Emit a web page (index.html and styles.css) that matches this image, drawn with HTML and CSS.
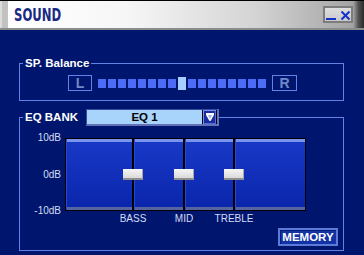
FILE: index.html
```html
<!DOCTYPE html>
<html lang="en">
<head>
  <meta charset="UTF-8">
  <title>Sound</title>
  <link rel="stylesheet" href="styles.css">
</head>
<body>
  <div class="window">
    <div class="titlebar">
      <span class="title">SOUND</span>
      <div class="win-buttons">
        <svg width="26" height="13" viewBox="0 0 26 13">
          <rect x="1" y="10" width="10" height="2" fill="#1432c8"/>
          <path d="M16.5 3.5 L24.5 11.5 M24.5 3.5 L16.5 11.5" stroke="#1432c8" stroke-width="2" fill="none"/>
        </svg>
      </div>
    </div>

    <fieldset class="group balance">
      <legend class="group-label">SP. Balance</legend>
      <div class="balance-row">
        <span class="side">L</span>
        <div class="blocks">
          <span class="block"></span><span class="block"></span><span class="block"></span><span class="block"></span>
          <span class="block"></span><span class="block"></span><span class="block"></span><span class="block"></span>
          <span class="bal-thumb"></span>
          <span class="block"></span><span class="block"></span><span class="block"></span><span class="block"></span>
          <span class="block"></span><span class="block"></span><span class="block"></span><span class="block"></span>
        </div>
        <span class="side side-r">R</span>
      </div>
    </fieldset>

    <fieldset class="group eq">
      <legend class="group-label eq-legend">
        <span>EQ BANK</span>
        <div class="select">
          <div class="select-value">EQ 1</div>
          <div class="select-btn">
            <svg width="8" height="8" viewBox="0 0 8 8">
              <path d="M0 0 H8 V2 L4.5 8 H3.5 L0 2 Z" fill="#ffffff"/>
              <path d="M2 2 H6 L4 6 Z" fill="#9ab4f0"/>
            </svg>
          </div>
        </div>
      </legend>

      <div class="eq-body">
        <div class="scale">
          <span>10dB</span>
          <span>0dB</span>
          <span>-10dB</span>
        </div>
        <div class="eq-main">
          <div class="panel">
            <div class="col w1"></div>
            <div class="track"><span class="knob"></span></div>
            <div class="col w2"></div>
            <div class="track"><span class="knob"></span></div>
            <div class="col w3"></div>
            <div class="track"><span class="knob"></span></div>
            <div class="col w4"></div>
          </div>
          <div class="band-labels">
            <div class="w1"></div>
            <div class="tick"><span>BASS</span></div>
            <div class="w2"></div>
            <div class="tick"><span>MID</span></div>
            <div class="w3"></div>
            <div class="tick"><span>TREBLE</span></div>
          </div>
        </div>
      </div>

      <div class="memory-row">
        <button class="memory-btn">MEMORY</button>
      </div>
    </fieldset>
  </div>
</body>
</html>
```

FILE: styles.css
```css
* {
  box-sizing: border-box;
  margin: 0;
  padding: 0;
}

body {
  width: 364px;
  height: 255px;
  overflow: hidden;
  background-color: #00166e;
  font-family: "Liberation Sans", Arial, sans-serif;
  color: #ffffff;
}

.window {
  width: 364px;
  height: 255px;
  background-color: #00166e;
}

/* title bar */
.titlebar {
  height: 30px;
  display: flex;
  align-items: center;
  justify-content: space-between;
  border-top: 1px solid #000;
  border-bottom: 2px solid #8c8c8c;
  background: linear-gradient(to right, #dcdcdc 0, #dcdcdc 2px, #c2c2c2 2px, #c2c2c2 8px, #ffffff 8px, #f6f6f6 35%, #d4d4d4 70%, #a4a4a4 97%, #505050 98.5%, #2a2a2a 100%);
}

.title {
  display: inline-block;
  padding-left: 14px;
  font-family: "Liberation Sans Narrow", "DejaVu Sans Condensed", "Liberation Sans", sans-serif;
  font-size: 18px;
  font-weight: bold;
  color: #1a2a84;
  transform: scaleX(0.72);
  transform-origin: 14px 50%;
}

.win-buttons {
  width: 30px;
  height: 17px;
  margin-right: 11px;
  border: 2px solid #7c7c7c;
  background: linear-gradient(#dedede, #cacaca);
  display: flex;
}

/* groups */
.group {
  margin: 0 20px 0 19px;
  border: 1px solid #6482e6;
  min-width: 0;
}

.group-label {
  margin-left: 3px;
  padding: 0 2px;
  font-size: 11.5px;
  font-weight: bold;
  line-height: 15px;
  color: #ffffff;
}

.balance {
  margin-top: 26px;
  padding: 4px 0 9px 0;
}

.balance-row {
  display: flex;
  align-items: center;
  gap: 6px;
  height: 16px;
  padding-left: 48px;
}

.side {
  width: 24px;
  height: 16px;
  border: 1px solid #6482e6;
  display: flex;
  align-items: center;
  justify-content: center;
  font-size: 14px;
  font-weight: bold;
  color: #7088cc;
}

.side-r {
  width: 25px;
}

.blocks {
  display: flex;
  align-items: center;
  gap: 2px;
}

.block {
  width: 8px;
  height: 9px;
  background-color: #4c6cf6;
}

.bal-thumb {
  width: 8px;
  height: 13px;
  background-color: #a6ceff;
}

/* eq bank */
.eq {
  margin-top: 8px;
  padding: 12px 0 4px 0;
}

.eq-legend {
  display: flex;
  align-items: center;
  gap: 8px;
  padding-right: 0;
}

.select {
  width: 133px;
  height: 17px;
  display: flex;
  border-top: 1px solid #3a4a9a;
  border-left: 1px solid #3a4a9a;
  border-right: 2px solid #6272b8;
  border-bottom: 2px solid #6272b8;
}

.select-value {
  flex: 1;
  background-color: #a8d4fc;
  color: #000;
  text-align: center;
  font-size: 11.5px;
  line-height: 14px;
}

.select-btn {
  width: 15px;
  border-left: 1px solid #000;
  border-right: 1px solid #000;
  background-color: #1a2ca4;
  box-shadow: inset 1px 1px 0 #7090f0, inset -1px -1px 0 #5070d8;
  display: flex;
  align-items: center;
  justify-content: center;
}

.eq-body {
  display: flex;
  gap: 4px;
}

.scale {
  width: 41px;
  height: 85px;
  margin-top: -6px;
  display: flex;
  flex-direction: column;
  justify-content: space-between;
  align-items: flex-end;
  font-size: 10px;
  line-height: 12px;
  color: #d4dcf4;
}

.panel {
  display: flex;
  height: 73px;
  border: 1px solid #000;
  background-color: #000;
}

.w1 { width: 66px; }
.w2 { width: 49px; }
.w3 { width: 48px; }
.w4 { width: 70px; }

.col {
  height: 100%;
  background: linear-gradient(to bottom, #7a94ee 0, #7a94ee 3px, #1838c6 3px, #0a26ac calc(100% - 3px), #56649f calc(100% - 3px), #56649f 100%);
  box-shadow: inset 1px 0 0 #2a48d0;
}

.track {
  width: 2px;
  display: flex;
  flex-direction: column;
  align-items: center;
  justify-content: center;
}

.knob {
  position: relative;
  z-index: 1;
  flex: none;
  width: 20px;
  height: 11px;
  background: linear-gradient(#f6f6f6, #dadada);
  border-bottom: 2px solid #8e8e8e;
  border-right: 1px solid #a8a8a8;
}

.band-labels {
  display: flex;
  margin-top: 2px;
  padding-left: 1px;
  font-size: 10px;
  line-height: 12px;
  color: #d4dcf4;
}

.tick {
  width: 2px;
  display: flex;
  justify-content: center;
  white-space: nowrap;
}

.memory-row {
  display: flex;
  justify-content: flex-end;
  margin-top: 3px;
  padding-right: 5px;
}

.memory-btn {
  width: 60px;
  height: 18px;
  border: 2px solid #5c7ad8;
  background-color: #1232a6;
  box-shadow: inset 1px 1px 0 #0a1c70;
  color: #ffffff;
  font-family: "Liberation Sans", Arial, sans-serif;
  font-size: 11.5px;
  font-weight: bold;
  line-height: 14px;
}
```
